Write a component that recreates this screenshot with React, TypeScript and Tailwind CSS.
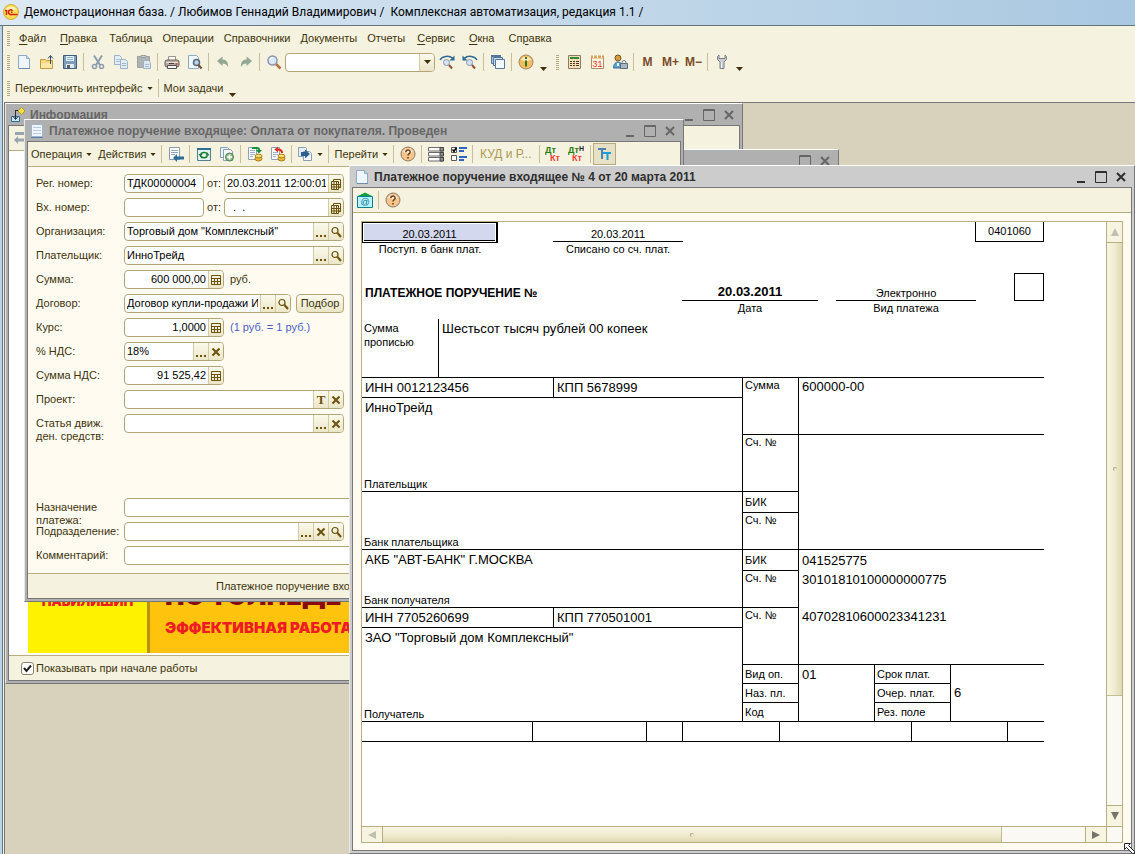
import { type ReactNode } from 'react';
import clsx from 'clsx';

/* ---------- icons ---------- */

function Icon({ children, size = 16 }: { children: ReactNode; size?: number }) {
  return <svg width={size} height={size} viewBox="0 0 16 16" fill="none" aria-hidden="true" className="shrink-0">{children}</svg>;
}

// small brown glyphs inside field buttons
function Glyph({ children }: { children: ReactNode }) {
  return <svg width="12" height="12" viewBox="0 0 12 12" fill="none" stroke="#6a5208" aria-hidden="true" className="shrink-0">{children}</svg>;
}

const icons = {
  page: (
    <Icon>
      <path d="M2.500 1.500h8l3 3v10h-11z" fill="#eef5fc" stroke="#8ea9c6" />
      <path d="M10.500 1.500v3h3" fill="#c9dcf0" stroke="#8ea9c6" />
      <path d="M3 14.500h11" stroke="#6f8dad" />
    </Icon>
  ),
  pageLines: (
    <Icon>
      <path d="M2.500 1.500h11v12h-11z" fill="#eef5fc" stroke="#9fb6cf" />
      <path d="M4 4.500h8M4 7.500h8M4 10.500h8" stroke="#b9cde2" />
      <path d="M2 14.500h12" stroke="#5c7fa8" />
    </Icon>
  ),
  open: (
    <Icon>
      <path d="M1.500 5.500h5l1 1h6v8h-12z" fill="#f5d682" stroke="#c79a3a" />
      <path d="M2 9h11v5H2z" fill="#fbe7a8" />
      <path d="M11.500 10V2M9 4.500 11.500 1.500 14 4.500" stroke="#34495c" />
    </Icon>
  ),
  save: (
    <Icon>
      <path d="M1.500 1.500h13v13h-13z" fill="#7f9db8" stroke="#3f5d78" />
      <path d="M4 2h8v5H4z" fill="#dff0fb" />
      <path d="M5 3.500h6M5 5.500h6" stroke="#8fb5d2" />
      <path d="M4 10h8v4H4z" fill="#e6e9ec" />
      <path d="M5 11h3v3H5z" fill="#4d6072" />
    </Icon>
  ),
  cut: (
    <Icon>
      <path d="M4 1.500 10 11M12 1.500 6 11" stroke="#8c9db0" strokeWidth="2" />
      <circle cx="4.500" cy="12.500" r="2" stroke="#8c9db0" strokeWidth="1.500" />
      <circle cx="11.500" cy="12.500" r="2" stroke="#8c9db0" strokeWidth="1.500" />
    </Icon>
  ),
  copy: (
    <Icon>
      <path d="M1.500 1.500h5l2 2v7h-7z" fill="#e3edf6" stroke="#9ab2ca" />
      <path d="M3 5.500h4M3 7.500h4" stroke="#a9bfd5" />
      <path d="M7.500 5.500h5l2 2v7h-7z" fill="#e3edf6" stroke="#9ab2ca" />
      <path d="M9 9.500h4M9 11.500h4" stroke="#9ab2ca" />
    </Icon>
  ),
  paste: (
    <Icon>
      <path d="M1.500 2.500h12v11h-12z" fill="#aeb3b4" stroke="#9aa0a3" />
      <path d="M5 1.500h5v2H5z" fill="#c9cdd0" stroke="#9aa0a3" />
      <path d="M7.500 6.500h5l2 2v6h-7z" fill="#dde7f0" stroke="#9fb2c4" />
      <path d="M9 10.500h4M9 12.500h4" stroke="#a9bfd5" />
    </Icon>
  ),
  print: (
    <Icon>
      <path d="M4.500 2.500h7v5h-7z" fill="#fff" stroke="#9b938b" />
      <rect x="1" y="6" width="14" height="7" rx="2" fill="#b7ada5" stroke="#6d6259" />
      <path d="M2 8.500h12" stroke="#e7e0da" />
      <path d="M3.500 11.500h9v3h-9z" fill="#f6f6f6" stroke="#57504a" />
      <circle cx="12.500" cy="10" r="1" fill="#e2402b" />
      <path d="M5 9.500h5" stroke="#463f39" />
    </Icon>
  ),
  preview: (
    <Icon>
      <path d="M1.500 1.500h8l2 2v11h-10z" fill="#f2f7fc" stroke="#8fa9c4" />
      <circle cx="9.500" cy="8.500" r="3" fill="#b9d5ee" stroke="#5b6b7c" strokeWidth="1.500" />
      <path d="m11.500 11 3 3.500" stroke="#7b4a2b" strokeWidth="2" />
    </Icon>
  ),
  undo: <Icon><path d="M2 7 7.500 2.500V5.500c4 0 6 3 5.500 7.500-1.500-3-3-3.500-5.500-3.500v2.500z" fill="#93a795" /></Icon>,
  redo: <Icon><path d="M14 7 8.500 2.500V5.500c-4 0-6 3-5.500 7.500 1.500-3 3-3.500 5.500-3.500v2.500z" fill="#93a795" /></Icon>,
  search: (
    <Icon>
      <circle cx="6.500" cy="6.500" r="4.500" fill="#d9e8f6" stroke="#8b93ad" strokeWidth="1.500" />
      <path d="M4 6a3 3 0 0 1 3-2.500" stroke="#fff" />
      <path d="m10 10 4.500 4.500" stroke="#b0714b" strokeWidth="2.500" />
    </Icon>
  ),
  findNext: (
    <Icon>
      <path d="M1 6C3 2 10 1 14 4.500" stroke="#2f6a92" strokeWidth="1.500" />
      <path d="M15.500 1.500v5h-5z" fill="#2f6a92" />
      <circle cx="7.500" cy="8.500" r="3" fill="#d5e4f3" stroke="#8b93ad" />
      <path d="m10 11 3 3.500" stroke="#8f4d3a" strokeWidth="2" />
    </Icon>
  ),
  findPrev: (
    <Icon>
      <path d="M15 6C13 2 6 1 2 4.500" stroke="#2f6a92" strokeWidth="1.500" />
      <path d="M.5 1.500v5h5z" fill="#2f6a92" />
      <circle cx="7.500" cy="8.500" r="3" fill="#d5e4f3" stroke="#8b93ad" />
      <path d="m10 11 3 3.500" stroke="#8f4d3a" strokeWidth="2" />
    </Icon>
  ),
  windows: (
    <Icon>
      <path d="M1.500 1.500h9v8h-9z" fill="#a9c4dc" stroke="#54789b" />
      <path d="M1 2h10" stroke="#54789b" strokeWidth="2" />
      <path d="M3.500 3.500h9v8h-9z" fill="#c8dbea" stroke="#54789b" />
      <path d="M5.500 5.500h9v9h-9z" fill="#f4f8fc" stroke="#54789b" />
    </Icon>
  ),
  info: (
    <Icon>
      <circle cx="8" cy="8" r="7" fill="#f4bd62" stroke="#9c8562" />
      <path d="M3 6a5.500 5.500 0 0 1 10 0c-3 1.500-7 1.500-10 0z" fill="#fde7bd" />
      <path d="M8 3v2M8 6.500v6" stroke="#2d7a1c" strokeWidth="2" />
    </Icon>
  ),
  help: (
    <Icon>
      <circle cx="8" cy="8" r="7" fill="#f7c48b" stroke="#8f7a68" />
      <path d="M3 6a5.500 5.500 0 0 1 10 0c-3 1.500-7 1.500-10 0z" fill="#fdebd4" />
      <path d="M5.800 6.200C5.800 3.300 10.200 3.300 10.200 6c0 1.600-2.200 1.600-2.200 3.500" stroke="#70401a" strokeWidth="1.500" />
      <path d="M8 11v1.600" stroke="#70401a" strokeWidth="1.600" />
    </Icon>
  ),
  calc: (
    <Icon>
      <path d="M2.500 1.500h12v13h-12z" fill="#f6dfb8" stroke="#8a7b62" />
      <path d="M4 4h9" stroke="#2e8b2e" strokeWidth="2" />
      <path d="M4 7.500h2M7 7.500h2M10 7.500h3M4 9.500h2M7 9.500h2M10 9.500h3M4 11.500h2M7 11.500h2M10 11.500h3" stroke="#453a2b" />
    </Icon>
  ),
  calendar: (
    <Icon>
      <path d="M2.500 2.500h12v12h-12z" fill="#fff6e6" stroke="#b08b66" />
      <path d="M2 3h13" stroke="#d9a55c" strokeWidth="3" />
      <path d="M4.500 1v3M8.500 1v3M12.500 1v3" stroke="#fff" />
      <text x="8.500" y="13" textAnchor="middle" fontSize="9" fontFamily="Liberation Sans" fill="#ee3322">31</text>
    </Icon>
  ),
  users: (
    <Icon>
      <circle cx="6" cy="4" r="3" fill="#d89b3c" stroke="#7b5420" />
      <path d="M1.500 14c0-8 9-8 9 0z" fill="#57a6d8" stroke="#3a6d93" />
      <path d="M5 9h2v3H5z" fill="#fff" />
      <path d="M10 10V8.500a2 2 0 0 1 4 0V10" stroke="#6d7c8f" />
      <path d="M8.500 9.500h7v5h-7z" fill="#a9b7c6" stroke="#5c6b7e" />
    </Icon>
  ),
  wrench: (
    <Icon>
      <path d="M5 1 3.500 2.500v3L6 8v6.500h4V8l2.500-2.500v-3L11 1v3.500H5z" fill="#c9cdd3" stroke="#7b7f88" />
      <path d="M7.500 8v6" stroke="#f3f4f6" />
    </Icon>
  ),
  infoWindow: (
    <Icon>
      <path d="M1.500 9.500h8v5h-8z" fill="#cfe5f5" stroke="#2f6a92" />
      <path d="M5.500 3v9M3.500 10l2 2.500 2-2.500M5.500 3.500H9" stroke="#1f2f3f" />
      <path d="m11.500.5 3.500 3.500-3.500 3.500L8 4z" fill="#f8e04a" stroke="#b89a20" />
    </Icon>
  ),
  back: <Icon><path d="M2 2h12v3H2z" fill="#98a5ae" /><path d="M1 10l4-4v2.500h9v3H5V14z" fill="#98a5ae" /></Icon>,
  sheetBack: (
    <Icon>
      <path d="M1.500 1.500h10v12h-10z" fill="#fff" stroke="#8b98a5" />
      <path d="M3 4.500h7M3 6.500h7M3 8.500h4" stroke="#8fa7bd" />
      <path d="M5 12 9 8v2.500h7v3H9V16z" fill="#2c6e9b" />
    </Icon>
  ),
  refresh: (
    <Icon>
      <path d="M1.500 2.500h13v12h-13z" fill="#e4f3f1" stroke="#53808c" />
      <path d="M1 3h14" stroke="#2f6f8f" strokeWidth="2" />
      <path d="M4.500 9C5 6 10 5.500 11.500 8M11.500 9.500c-1 3-5.500 3-7 .5" stroke="#1d7a33" strokeWidth="1.500" />
      <path d="M2.500 8h4L4.500 11zM13.500 9.500h-4l2-3z" fill="#1d7a33" />
    </Icon>
  ),
  addCopy: (
    <Icon>
      <path d="M1.500 1.500h7l2 2v8h-9z" fill="#eaf2fa" stroke="#8b9fb5" />
      <path d="M4.500 3.500h7l2 2v9h-9z" fill="#f4f8fc" stroke="#8b9fb5" />
      <circle cx="10.500" cy="11" r="4" fill="#8fbd8c" stroke="#4d7f4d" />
      <path d="M8 11h5M10.500 8.500v5" stroke="#fff" strokeWidth="1.500" />
    </Icon>
  ),
  post: (
    <Icon>
      <path d="M1.500 1.500h8v12h-8z" fill="#fff" stroke="#93a3b3" />
      <path d="M3 4.500h5M3 6.500h5M3 8.500h5M3 10.500h3" stroke="#9ab2ca" />
      <path d="M5 2h5c1.500 0 2 1 2 2" stroke="#15933a" strokeWidth="2" />
      <path d="M9 4h6l-3 3.500z" fill="#15933a" />
      <ellipse cx="11.500" cy="12.500" rx="3.500" ry="2.500" fill="#e8b93a" stroke="#ac7f14" />
      <ellipse cx="11.500" cy="10" rx="3.500" ry="1.800" fill="#f8de7a" stroke="#ac7f14" />
    </Icon>
  ),
  unpost: (
    <Icon>
      <path d="M1.500 1.500h8v12h-8z" fill="#fff" stroke="#93a3b3" />
      <path d="M3 6.500h5M3 8.500h5M3 10.500h3" stroke="#9ab2ca" />
      <path d="M12 7c0-3-2-3.500-4-3.500" stroke="#d8281c" strokeWidth="2" />
      <path d="M8 .5v6L4.500 3.500z" fill="#d8281c" />
      <ellipse cx="11.500" cy="12.500" rx="3.500" ry="2.500" fill="#e8b93a" stroke="#ac7f14" />
      <ellipse cx="11.500" cy="10" rx="3.500" ry="1.800" fill="#f8de7a" stroke="#ac7f14" />
    </Icon>
  ),
  basedOn: (
    <Icon>
      <path d="M1.500 1.500h7l1 1v8h-8z" fill="#e3edf6" stroke="#8b9fb5" />
      <path d="M6.500 5.500h6l2 2v7h-8z" fill="#f4f8fc" stroke="#8b9fb5" />
      <path d="M4 6h4V3.500L13 8l-5 4.500V10H4z" fill="#2c6090" />
    </Icon>
  ),
  rows: (
    <Icon>
      <path d="M.5 1.500h15v3.500H.5zM.5 6.500h15V10H.5zM.5 11.500h15V15H.5z" fill="#fff" stroke="#6b6b6b" />
      <path d="M12 1.500h3.500V5H12zM12 6.500h3.500V10H12zM12 11.500h3.500V15H12z" fill="#8f8f8f" stroke="#444" />
    </Icon>
  ),
  checklist: (
    <Icon>
      <path d="M.5 1.500h5v5h-5zM.5 9.500h5v5h-5z" fill="#fff" stroke="#5a5a5a" />
      <path d="m1.500 3.500 1.500 2 2.500-4" stroke="#000" strokeWidth="1.500" />
      <path d="M8 2h8M8 5h5M8 11h8M8 14h5" stroke="#2d62c4" strokeWidth="2" />
    </Icon>
  ),
  dtkt: (
    <Icon>
      <text x="0" y="7" fontSize="9" fontWeight="bold" fontFamily="Liberation Sans" fill="#2b7d0c">Дт</text>
      <text x="5" y="15" fontSize="9" fontWeight="bold" fontFamily="Liberation Sans" fill="#ef3b3b">Кт</text>
    </Icon>
  ),
  dtktN: (
    <Icon>
      <text x="0" y="7" fontSize="9" fontWeight="bold" fontFamily="Liberation Sans" fill="#2b7d0c">Дт</text>
      <text x="11" y="5" fontSize="7" fontWeight="bold" fontFamily="Liberation Sans" fill="#222">Н</text>
      <text x="4" y="15" fontSize="9" fontWeight="bold" fontFamily="Liberation Sans" fill="#ef3b3b">Кт</text>
    </Icon>
  ),
  tt: (
    <Icon>
      <path d="M2 3h8M6 3v10" stroke="#4f83ad" strokeWidth="2" />
      <path d="M7 7h8M11.500 7v7" stroke="#1aa0d8" strokeWidth="2" />
    </Icon>
  ),
  mail: (
    <Icon>
      <path d="M.5 4.500h15v11H.5z" fill="#b8f3fa" stroke="#0c7f98" />
      <path d="M1 4h14L8 .5z" fill="#12a03a" />
      <text x="8" y="13" textAnchor="middle" fontSize="9" fontFamily="Liberation Sans" fill="#0a6f96">@</text>
    </Icon>
  ),
  pick: <Glyph><path d="M1.500 3.500h7v8h-7zM1.500 6.500h9M1.500 9h9M4 3.500v8M6.500 3.500v8M3.500 3V1.500h7v8h-2" /></Glyph>,
  numpad: <Glyph><path d="M1.500 1.500h9v9h-9zM1 4.500h10M1 7.500h10M4.500 4.500v6M7.500 4.500v6" /></Glyph>,
  lens: <Glyph><circle cx="5" cy="4.500" r="3" strokeWidth="1.200" /><path d="m7.500 7 3.500 4" strokeWidth="2" /></Glyph>,
  clear: <Glyph><path d="m2.500 2.500 7 7M9.500 2.500l-7 7" strokeWidth="2" /></Glyph>,
  dots: <Glyph><path d="M1 10h2M5 10h2M9 10h2" strokeWidth="2" /></Glyph>,
  type: <span className="font-['Liberation_Serif',serif] text-[13px] font-bold leading-none text-[#6a5208]">T</span>,
  logo: (
    <Icon>
      <circle cx="8" cy="8" r="7.500" fill="#f9dd52" stroke="#d8a838" />
      <path d="M2 6a7 7 0 0 1 12 0z" fill="#fdf2b4" />
      <path d="M2 6.500h1.500V11" stroke="#d3221b" strokeWidth="1.500" />
      <path d="M9.500 6.800C8 5 5.500 6 5.500 8s1.500 3 3.500 2.500h5.500M9.500 8.200H8" stroke="#d3221b" strokeWidth="1.500" />
    </Icon>
  ),
};

function Caret({ className }: { className?: string }) {
  return <svg width="7" height="4" viewBox="0 0 7 4" className={className} aria-hidden="true"><path d="M0 0h7L3.500 4z" fill="#3d300a" /></svg>;
}

/* ---------- toolbar pieces ---------- */

function Grip() {
  return <span className="w-[3px] h-[15px] shrink-0 bg-[repeating-linear-gradient(#b3aa80_0_1px,transparent_1px_2px)]" />;
}

function Sep() {
  return <span className="w-[1px] h-[18px] mx-[2px] shrink-0 bg-[#c6bf97]" />;
}

function ToolButton({ label, children, on }: { label: string; children: ReactNode; on?: boolean }) {
  return (
    <button
      aria-label={label}
      className={clsx('w-[23px] h-[22px] shrink-0 flex items-center justify-center', on && 'border border-[#b5ab7c] bg-[#e6e0c4]')}
    >
      {children}
    </button>
  );
}

function MoreArrow() {
  return <button aria-label="Ещё" className="w-[13px] h-[18px] shrink-0 flex items-end justify-center"><Caret /></button>;
}

function DropButton({ children }: { children: ReactNode }) {
  return <button className="px-[3px] shrink-0 flex items-center gap-1 whitespace-nowrap">{children}<Caret className="w-[6px] h-[3px]" /></button>;
}

/* ---------- mdi window ---------- */

type WindowProps = { title: string; icon: ReactNode; active?: boolean; className: string; children?: ReactNode };

function Window({ title, icon, active, className, children }: WindowProps) {
  return (
    <section
      className={clsx(
        'absolute flex flex-col border border-t-white border-l-[#e8e8e8] border-r-[#777] border-b-[#777]',
        active ? 'bg-[#ccc] text-[#2e2e2e]' : 'bg-[#b0b0b0] text-[#666]',
        className,
      )}
    >
      <header className="h-[21px] shrink-0 flex items-center pl-1 pr-[3px]">
        {icon}
        <h2 className="ml-1 flex-1 text-[12px] font-bold whitespace-nowrap overflow-hidden">{title}</h2>
        <button aria-label="Свернуть" className="w-5 h-4 flex items-center justify-center">
          <svg width="12" height="12" viewBox="0 0 12 12"><path d="M2 11h8" stroke="currentColor" strokeWidth="2" /></svg>
        </button>
        <button aria-label="Развернуть" className="w-5 h-4 flex items-center justify-center">
          <svg width="12" height="12" viewBox="0 0 12 12" fill="none"><path d="M.5.500h11v11H.5zM0 1.500h12" stroke="currentColor" /></svg>
        </button>
        <button aria-label="Закрыть" className="w-5 h-4 flex items-center justify-center">
          <svg width="12" height="12" viewBox="0 0 12 12"><path d="m2 2 8 8M10 2l-8 8" stroke="currentColor" strokeWidth="2" /></svg>
        </button>
      </header>
      <div className="flex-1 min-h-0 mx-[2px] mb-[2px] border border-[#777] bg-[#fffbf0] text-[#40340d] flex flex-col overflow-hidden">{children}</div>
    </section>
  );
}

/* ---------- incoming payment form ---------- */

type FieldProps = { id: string; value?: string; width: string; buttons?: (keyof typeof icons)[]; right?: boolean };

function Field({ id, value = '', width, buttons = [], right }: FieldProps) {
  return (
    <div className={clsx('h-[19px] flex shrink-0 border border-[#b0a677] rounded bg-white overflow-hidden', width)}>
      <input
        id={id}
        defaultValue={value}
        className={clsx('flex-1 min-w-0 px-[2px] text-black bg-transparent outline-none', right && 'text-right')}
      />
      {buttons.map(b => (
        <button key={b} type="button" aria-label={b} className="w-[15px] shrink-0 border-l border-[#d3cba3] bg-linear-to-b from-[#fbf9ec] to-[#ebe6c8] flex items-center justify-center">
          {icons[b]}
        </button>
      ))}
    </div>
  );
}

function Row({ id, label, children }: { id: string; label: ReactNode; children: ReactNode }) {
  return (
    <div className="h-[19px] flex items-start">
      <label htmlFor={id} className="w-[88px] shrink-0 pt-[3px] leading-[13px] whitespace-nowrap">{label}</label>
      <div className="flex-1 h-[19px] flex items-center">{children}</div>
    </div>
  );
}

function PaymentForm() {
  return (
    <>
      <div className="h-[25px] shrink-0 flex items-center bg-[#f5f2df] border-b border-[#b8ae80]">
        <DropButton>Операция</DropButton>
        <DropButton>Действия</DropButton>
        <Sep />
        <ToolButton label="Записать и закрыть">{icons.sheetBack}</ToolButton>
        <Sep />
        <ToolButton label="Обновить">{icons.refresh}</ToolButton>
        <ToolButton label="Скопировать">{icons.addCopy}</ToolButton>
        <Sep />
        <ToolButton label="Провести">{icons.post}</ToolButton>
        <ToolButton label="Отмена проведения">{icons.unpost}</ToolButton>
        <Sep />
        <DropButton>{icons.basedOn}</DropButton>
        <Sep />
        <DropButton>Перейти</DropButton>
        <Sep />
        <ToolButton label="Справка">{icons.help}</ToolButton>
        <Sep />
        <ToolButton label="Список">{icons.rows}</ToolButton>
        <ToolButton label="Настройка">{icons.checklist}</ToolButton>
        <Sep />
        <button className="px-[5px] text-[12px] text-[#a89a58]">КУД и Р...</button>
        <Sep />
        <ToolButton label="Проводки">{icons.dtkt}</ToolButton>
        <ToolButton label="Проводки НУ">{icons.dtktN}</ToolButton>
        <Sep />
        <ToolButton label="Учёт" on>{icons.tt}</ToolButton>
      </div>

      <form className="flex-1 pl-2 pt-[7px] pb-2 flex flex-col gap-[5px]">
        <Row id="reg" label="Рег. номер:">
          <Field id="reg" value="ТДК00000004" width="w-20" />
          <label htmlFor="regDate" className="w-5 pl-[3px]">от:</label>
          <Field id="regDate" value="20.03.2011 12:00:01" width="w-[120px]" buttons={['pick']} />
        </Row>
        <Row id="inNum" label="Вх. номер:">
          <Field id="inNum" width="w-20" />
          <label htmlFor="inDate" className="w-5 pl-[3px]">от:</label>
          <Field id="inDate" value="  .  ." width="w-[120px]" buttons={['pick']} />
        </Row>
        <Row id="org" label="Организация:">
          <Field id="org" value={'Торговый дом "Комплексный"'} width="w-[220px]" buttons={['dots', 'lens']} />
        </Row>
        <Row id="payer" label="Плательщик:">
          <Field id="payer" value="ИнноТрейд" width="w-[220px]" buttons={['dots', 'lens']} />
        </Row>
        <Row id="sum" label="Сумма:">
          <Field id="sum" value="600 000,00" width="w-[100px]" buttons={['numpad']} right />
          <span className="ml-[6px]">руб.</span>
        </Row>
        <Row id="contract" label="Договор:">
          <Field id="contract" value="Договор купли-продажи ИнноТрейд" width="w-[167px]" buttons={['dots', 'lens']} />
          <button type="button" className="ml-[5px] w-12 h-[19px] border border-[#b0a677] rounded bg-linear-to-b from-[#fbf9ec] to-[#ebe6c8]">Подбор</button>
        </Row>
        <Row id="rate" label="Курс:">
          <Field id="rate" value="1,0000" width="w-[100px]" buttons={['numpad']} right />
          <span className="ml-[6px] text-[#4a5fc4]">(1 руб. = 1 руб.)</span>
        </Row>
        <Row id="vat" label="% НДС:">
          <Field id="vat" value="18%" width="w-[100px]" buttons={['dots', 'clear']} />
        </Row>
        <Row id="vatSum" label="Сумма НДС:">
          <Field id="vatSum" value="91 525,42" width="w-[100px]" buttons={['numpad']} right />
        </Row>
        <Row id="project" label="Проект:">
          <Field id="project" width="w-[220px]" buttons={['type', 'clear']} />
        </Row>
        <Row id="item" label={<>Статья движ.<br />ден. средств:</>}>
          <Field id="item" width="w-[220px]" buttons={['dots', 'clear']} />
        </Row>
        <div className="h-[55px]" />
        <Row id="purpose" label={<>Назначение<br />платежа:</>}>
          <Field id="purpose" width="w-[540px]" />
        </Row>
        <Row id="dept" label="Подразделение:">
          <Field id="dept" width="w-[220px]" buttons={['dots', 'clear', 'lens']} />
        </Row>
        <Row id="comment" label="Комментарий:">
          <Field id="comment" width="w-[540px]" />
        </Row>
      </form>

      <footer className="h-[25px] shrink-0 border-t border-[#b8ae80] bg-[#f5f2df] flex items-center pl-[188px]">
        <button>Платежное поручение входящее</button>
      </footer>
    </>
  );
}

/* ---------- printed payment order ---------- */

function Cap({ children, className }: { children?: ReactNode; className: string }) {
  return <div className={clsx('border-l border-b border-black pl-[2px] leading-[15px] text-[11px]', className)}>{children}</div>;
}

function Party({ name, role, className }: { name?: string; role: string; className: string }) {
  return (
    <div className={clsx('border-b border-black flex flex-col justify-between', className)}>
      <span className="pl-[3px] pt-[2px]">{name}</span>
      <span className="pl-[2px] text-[11px] leading-[13px]">{role}</span>
    </div>
  );
}

function TaxIds({ inn, kpp }: { inn: string; kpp: string }) {
  return (
    <div className="h-5 flex items-center border-b border-black">
      <span className="w-[191px] pl-[3px]">{inn}</span>
      <span className="h-full flex-1 border-l border-black pl-[3px] flex items-center">{kpp}</span>
    </div>
  );
}

const stripe = ['w-[170px]', 'w-[114px] border-l', 'w-[36px] border-l', 'w-[97px] border-l', 'w-[132px] border-l', 'w-[96px] border-l', 'flex-1 border-l'];

function PaymentOrder() {
  return (
    <div className="w-[682px] text-black text-[13px] leading-4">
      <div className="flex text-[11px] text-center">
        <div className="w-[136px]">
          <div className="h-[21px] border border-r-2 border-black bg-white p-px">
            <div className="h-full bg-[#d3d8ee] border-b border-black flex items-end justify-center leading-[12px]">20.03.2011</div>
          </div>
          <div className="leading-[13px]">Поступ. в банк плат.</div>
        </div>
        <div className="w-[130px] ml-[55px]">
          <div className="h-5 border-b border-black flex items-end justify-center leading-[14px]">20.03.2011</div>
          <div className="leading-[15px]">Списано со сч. плат.</div>
        </div>
        <div className="w-[69px] h-5 ml-auto border border-t-0 border-black leading-[18px]">0401060</div>
      </div>

      <div className="flex mt-4 text-[11px] text-center">
        <h3 className="w-[320px] h-7 pl-[3px] flex items-end text-[12px] font-bold">ПЛАТЕЖНОЕ ПОРУЧЕНИЕ №</h3>
        <div className="w-[136px]">
          <div className="h-7 border-b border-black flex items-end justify-center text-[13px] font-bold">20.03.2011</div>
          <div className="leading-[15px]">Дата</div>
        </div>
        <div className="w-[140px] ml-[18px]">
          <div className="h-7 border-b border-black flex items-end justify-center leading-[14px]">Электронно</div>
          <div className="leading-[15px]">Вид платежа</div>
        </div>
        <div className="w-[30px] h-7 ml-auto border border-black" />
      </div>

      <div className="flex mt-[3px] h-[58px]">
        <div className="w-[76px] pl-[2px] pt-[2px] text-[11px] leading-[14px]">Сумма<br />прописью</div>
        <div className="flex-1 border-l border-black pl-[3px] pt-[2px]">Шестьсот тысяч рублей 00 копеек</div>
      </div>

      <div className="flex border-t border-black">
        <div className="w-[380px]">
          <TaxIds inn="ИНН 0012123456" kpp="КПП 5678999" />
          <Party className="h-[94px]" name="ИнноТрейд" role="Плательщик" />
          <Party className="h-[58px]" role="Банк плательщика" />
          <Party className="h-[58px]" name={'АКБ "АВТ-БАНК" Г.МОСКВА'} role="Банк получателя" />
          <TaxIds inn="ИНН 7705260699" kpp="КПП 770501001" />
          <Party className="h-[94px]" name={'ЗАО "Торговый дом Комплексный"'} role="Получатель" />
        </div>
        <div className="w-[56px]">
          <Cap className="h-[57px]">Сумма</Cap>
          <Cap className="h-[57px]">Сч. №</Cap>
          <Cap className="h-[21px] flex items-center">БИК</Cap>
          <Cap className="h-[37px]">Сч. №</Cap>
          <Cap className="h-[21px] flex items-center">БИК</Cap>
          <Cap className="h-[37px]">Сч. №</Cap>
          <Cap className="h-[57px]">Сч. №</Cap>
          <Cap className="h-[19px] flex items-center">Вид оп.</Cap>
          <Cap className="h-[19px] flex items-center">Наз. пл.</Cap>
          <Cap className="h-[19px] flex items-center">Код</Cap>
        </div>
        <div className="flex-1 border-l border-black">
          <div className="h-[57px] border-b border-black pl-[3px] pt-px">600000-00</div>
          <div className="h-[115px] border-b border-black" />
          <div className="h-[115px] border-b border-black pl-[3px]">
            <div className="h-[21px] flex items-center">041525775</div>
            <div className="h-[37px] pt-px">30101810100000000775</div>
            <div className="pt-px">40702810600023341231</div>
          </div>
          <div className="h-[57px] flex">
            <div className="w-[75px] border-b border-black pl-[3px] pt-[2px]">01</div>
            <div className="w-[76px]">
              <Cap className="h-[19px] flex items-center">Срок плат.</Cap>
              <Cap className="h-[19px] flex items-center">Очер. плат.</Cap>
              <Cap className="h-[19px] flex items-center">Рез. поле</Cap>
            </div>
            <div className="flex-1 border-l border-b border-black pl-[3px] flex items-center">6</div>
          </div>
        </div>
      </div>

      <div className="h-5 flex border-b border-black">
        {stripe.map(w => <div key={w} className={clsx('border-black', w)} />)}
      </div>
    </div>
  );
}

function ScrollArrow({ d, dim, label }: { d: string; dim?: boolean; label: string }) {
  return (
    <button aria-label={label} className="w-full h-full flex items-center justify-center bg-[#f7f4e2]">
      <svg width="8" height="8" viewBox="0 0 8 8"><path d={d} fill={dim ? '#c2bfae' : '#77736a'} /></svg>
    </button>
  );
}

function OrderView() {
  return (
    <>
      <div className="h-[25px] shrink-0 flex items-center bg-[#f5f2df] border-b border-[#b8ae80]">
        <ToolButton label="Отправить">{icons.mail}</ToolButton>
        <Sep />
        <ToolButton label="Справка">{icons.help}</ToolButton>
      </div>
      <div className="flex-1 min-h-0 px-2 pt-2 pb-[7px] flex">
        <div className="flex-1 min-w-0 border border-[#b8ae80] grid grid-cols-[minmax(0,1fr)_16px] grid-rows-[minmax(0,1fr)_16px]">
          <div className="bg-white overflow-hidden"><PaymentOrder /></div>
          <div className="border-l border-[#b8ae80] flex flex-col">
            <div className="h-[21px] border-b border-[#b8ae80]"><ScrollArrow label="Вверх" dim d="M4 0l4 8H0z" /></div>
            <div className="flex-[454] border-b border-[#c4bc92] bg-linear-to-r from-[#f8f5e4] via-[#f1ecd0] to-[#e0d9b4] flex items-center justify-center">
              <span className="size-1 rounded-full border-t border-l border-[#b5ad88]" />
            </div>
            <div className="flex-[110] bg-[#faf9f4]" />
            <div className="h-[21px] border-t border-[#b8ae80]"><ScrollArrow label="Вниз" d="M0 0h8L4 8z" /></div>
          </div>
          <div className="border-t border-[#b8ae80] flex">
            <div className="w-[21px] border-r border-[#b8ae80]"><ScrollArrow label="Влево" dim d="M8 0v8L0 4z" /></div>
            <div className="flex-[620] border-r border-[#c4bc92] bg-linear-to-b from-[#f8f5e4] via-[#f1ecd0] to-[#e0d9b4] flex items-center justify-center">
              <span className="size-1 rounded-full border-t border-l border-[#b5ad88]" />
            </div>
            <div className="flex-[83] bg-[#faf9f4]" />
            <div className="w-[21px] border-l border-[#b8ae80]"><ScrollArrow label="Вправо" d="M0 0l8 4-8 4z" /></div>
          </div>
          <div className="border-t border-l border-[#b8ae80] bg-[#faf9f4]" />
        </div>
      </div>
    </>
  );
}

function InfoWindow() {
  return (
    <>
      <div className="h-[25px] shrink-0 flex items-center bg-[#f5f2df] border-b border-[#b8ae80]">
        <ToolButton label="Назад">{icons.back}</ToolButton>
      </div>
      <div className="flex-1 bg-white pl-[19px] pb-[2px] flex items-stretch font-['Inter','Liberation_Sans',sans-serif] font-black leading-4">
        <div className="w-[119px] bg-[#fff200] flex flex-col justify-end items-center pb-[44px] text-[13px] text-[#ee1c25]">
          НАВИЛИШИН
        </div>
        <div className="flex-1 border-l-3 border-[#b8920a] bg-linear-to-b from-[#ffd40a] to-[#ffc20e] pl-[15px] flex flex-col justify-end whitespace-nowrap">
          <span className="text-[26px] leading-6 text-[#8b0a0f]">ПО ТОЛПЕДЕ</span>
          <span className="pt-3 pb-[17px] text-[15px] text-[#ee1c25]">ЭФФЕКТИВНАЯ РАБОТА</span>
        </div>
      </div>
      <footer className="h-[25px] shrink-0 border-t border-[#b8ae80] bg-[#f5f2df] flex items-center pl-3">
        <label className="flex items-center gap-[2px]">
          <input type="checkbox" defaultChecked className="peer sr-only" />
          <span className="size-[13px] border border-[#8b8468] rounded-[3px] bg-white flex items-center justify-center">
            <svg width="9" height="9" viewBox="0 0 9 9" fill="none"><path d="m1 4 2.500 3L8 1.500" stroke="#222" strokeWidth="2" /></svg>
          </span>
          Показывать при начале работы
        </label>
      </footer>
    </>
  );
}

const menu: { key?: string; before?: string; rest: string }[] = [
  { key: 'Ф', rest: 'айл' },
  { key: 'П', rest: 'равка' },
  { rest: 'Таблица' },
  { rest: 'Операции' },
  { rest: 'Справочники' },
  { rest: 'Документы' },
  { rest: 'Отчеты' },
  { key: 'С', rest: 'ервис' },
  { key: 'О', rest: 'кна' },
  { before: 'Сп', key: 'р', rest: 'авка' },
];

export default function App() {
  return (
    <div className="h-screen overflow-hidden flex flex-col bg-[#f5f2df] text-[11px] text-[#40340d] font-['Liberation_Sans',Arial,sans-serif]">
      <header className="h-[26px] shrink-0 flex items-center gap-[5px] pl-[3px] pb-[2px] border-b border-[#64757d] bg-linear-to-r from-[#dce9f5] via-[#c4d9ea] to-[#a9c8e1] text-black">
        {icons.logo}
        <h1 className="font-['Roboto','Noto_Sans',sans-serif] text-[12px] whitespace-pre">
          {'Демонстрационная база. / Любимов Геннадий Владимирович /  Комплексная автоматизация, редакция 1.1 /'}
        </h1>
      </header>

      <div className="flex-1 min-h-0 flex flex-col border-l-2 border-[#b9d3ea]">
        <div className="flex-1 min-h-0 flex flex-col border-l border-[#64757d]">
          <nav className="h-6 shrink-0 flex items-center pl-1">
            <Grip />
            <span className="w-[2px]" />
            {menu.map(m => (
              <button key={m.rest} className={m.key ? 'px-[7px]' : 'px-[5px]'}>
                {m.before}
                {m.key && <u className="underline-offset-2">{m.key}</u>}
                {m.rest}
              </button>
            ))}
          </nav>

          <div className="h-6 shrink-0 flex items-center pl-1">
            <Grip />
            <span className="w-[2px]" />
            <ToolButton label="Новый">{icons.page}</ToolButton>
            <ToolButton label="Открыть">{icons.open}</ToolButton>
            <ToolButton label="Сохранить">{icons.save}</ToolButton>
            <Sep />
            <ToolButton label="Вырезать">{icons.cut}</ToolButton>
            <ToolButton label="Копировать">{icons.copy}</ToolButton>
            <ToolButton label="Вставить">{icons.paste}</ToolButton>
            <Sep />
            <ToolButton label="Печать">{icons.print}</ToolButton>
            <ToolButton label="Просмотр">{icons.preview}</ToolButton>
            <Sep />
            <ToolButton label="Отменить">{icons.undo}</ToolButton>
            <ToolButton label="Повторить">{icons.redo}</ToolButton>
            <Sep />
            <ToolButton label="Найти">{icons.search}</ToolButton>
            <div className="w-[150px] h-[19px] flex border border-[#b0a677] rounded bg-white overflow-hidden">
              <input aria-label="Поиск" className="flex-1 min-w-0 px-1 outline-none" />
              <button aria-label="История поиска" className="w-[15px] border-l border-[#d3cba3] bg-linear-to-b from-[#fbf9ec] to-[#ebe6c8] flex items-center justify-center"><Caret /></button>
            </div>
            <ToolButton label="Найти далее">{icons.findNext}</ToolButton>
            <ToolButton label="Найти назад">{icons.findPrev}</ToolButton>
            <Sep />
            <ToolButton label="Окна">{icons.windows}</ToolButton>
            <Sep />
            <ToolButton label="О программе">{icons.info}</ToolButton>
            <MoreArrow />
            <span className="w-[6px]" />
            <Grip />
            <span className="w-[3px]" />
            <ToolButton label="Калькулятор">{icons.calc}</ToolButton>
            <ToolButton label="Календарь">{icons.calendar}</ToolButton>
            <ToolButton label="Пользователи">{icons.users}</ToolButton>
            <Sep />
            <button className="w-[23px] text-[12px] font-bold text-[#7a4a2a]">M</button>
            <button className="w-[23px] text-[12px] font-bold text-[#7a4a2a]">M+</button>
            <button className="w-[23px] text-[12px] font-bold text-[#7a4a2a]">M−</button>
            <Sep />
            <ToolButton label="Сервис">{icons.wrench}</ToolButton>
            <MoreArrow />
          </div>

          <div className="h-7 shrink-0 flex items-center pl-1">
            <Grip />
            <span className="w-[2px]" />
            <DropButton>Переключить интерфейс</DropButton>
            <Sep />
            <button className="px-[3px]">Мои задачи</button>
            <MoreArrow />
          </div>

          {/* workspace with the floating windows */}
          <main className="relative flex-1 min-h-0 overflow-hidden ml-px border-t border-l border-[#777] bg-[#d8d2bc]">
            <Window title="Информация" icon={icons.infoWindow} className="left-0 top-0 w-[738px] h-[581px]">
              <InfoWindow />
            </Window>
            <Window title="" icon={null} className="left-[400px] top-[46px] w-[434px] h-[500px]" />
            <Window title="Платежное поручение входящее: Оплата от покупателя. Проведен" icon={icons.pageLines} className="left-[19px] top-4 w-[660px]">
              <PaymentForm />
            </Window>
            <Window title="Платежное поручение входящее № 4 от 20 марта 2011" icon={icons.page} active className="left-[344px] top-[62px] right-0 bottom-0">
              <OrderView />
            </Window>
            <svg width="11" height="11" viewBox="0 0 11 11" className="absolute right-0 bottom-0" aria-hidden="true">
              <path d="M.5.500h6l-2 2 6 6v2h-2l-6-6-2 2z" fill="#fff" stroke="#1f2430" />
            </svg>
          </main>
        </div>
      </div>
    </div>
  );
}
